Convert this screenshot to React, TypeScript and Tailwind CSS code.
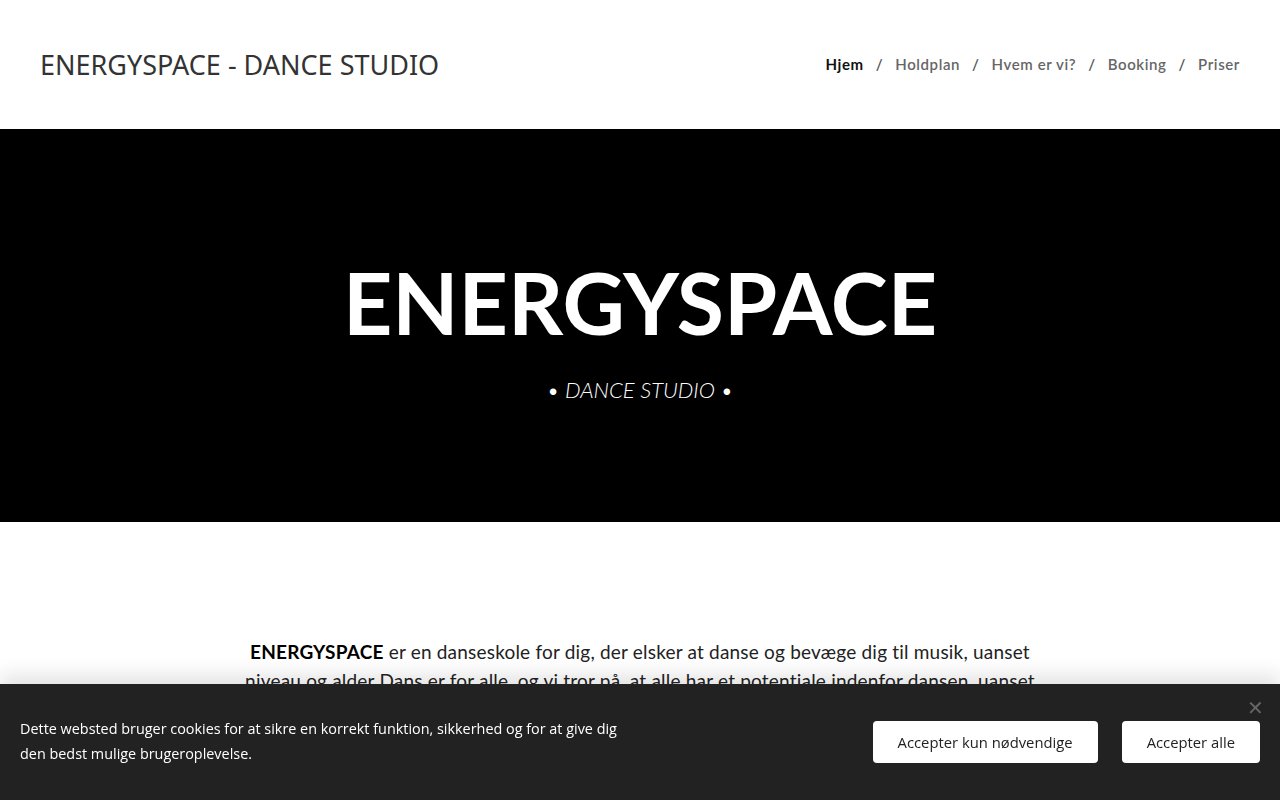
import React from "react";

export default function App() {
  const nav = ["Hjem", "Holdplan", "Hvem er vi?", "Booking", "Priser"];
  return (
    <div className="min-h-[800px] bg-white" style={{ fontFamily: "Lato, 'Open Sans', sans-serif" }}>
      <header className="h-[129px] flex items-center justify-between px-10">
        <div className="text-[27px] text-[#333] tracking-[0px] leading-none" style={{ fontFamily: "'Noto Sans', sans-serif" }}>
          ENERGYSPACE - DANCE STUDIO
        </div>
        <nav className="flex items-center text-[15px] font-semibold text-[#666] tracking-[0.6px]">
          {nav.map((n, i) => (
            <React.Fragment key={n}>
              {i > 0 && <span className="mx-3 text-[#555]">/</span>}
              <span className={i === 0 ? "text-[#111] font-bold" : ""}>{n}</span>
            </React.Fragment>
          ))}
        </nav>
      </header>
      <section className="h-[393px] bg-black flex flex-col items-center pt-[130px] text-white">
        <h1 className="text-[86px] font-bold leading-none tracking-[0px]">ENERGYSPACE</h1>
        <p className="mt-[28px] text-[22px] leading-[33px] italic font-light">• DANCE STUDIO •</p>
      </section>
      <section className="pt-[115px] pb-10 flex justify-center">
        <p className="max-w-[820px] text-center text-[19px] leading-[29px] text-[#222] font-normal tracking-[0.2px]">
          <b className="font-bold text-black">ENERGYSPACE</b> er en danseskole for dig, der elsker at danse og bevæge dig til musik, uanset
          niveau og alder Dans er for alle, og vi tror på, at alle har et potentiale indenfor dansen, uanset
          hvilken baggrund du kommer med. Hos os er der plads til alle.
        </p>
      </section>
      <div className="fixed bottom-0 left-0 right-0 h-[116px] bg-[#222222] shadow-[0_-8px_20px_rgba(0,0,0,0.12)] flex items-center justify-between pl-5 pr-5" style={{ fontFamily: "'Open Sans', sans-serif" }}>
        <p className="text-white text-[14.4px] leading-[25px] max-w-[610px] mt-[-2px]">
          Dette websted bruger cookies for at sikre en korrekt funktion, sikkerhed og for at give dig den bedst mulige brugeroplevelse.
        </p>
        <div className="flex gap-6">
          <button className="h-[42px] px-[25px] bg-white rounded-[4px] text-[14.8px] text-[#222]">Accepter kun nødvendige</button>
          <button className="h-[42px] px-[25px] bg-white rounded-[4px] text-[14.8px] text-[#222]">Accepter alle</button>
        </div>
        <span className="absolute right-[16px] top-[14px] text-[#666] text-[20px] leading-none">✕</span>
      </div>
    </div>
  );
}
